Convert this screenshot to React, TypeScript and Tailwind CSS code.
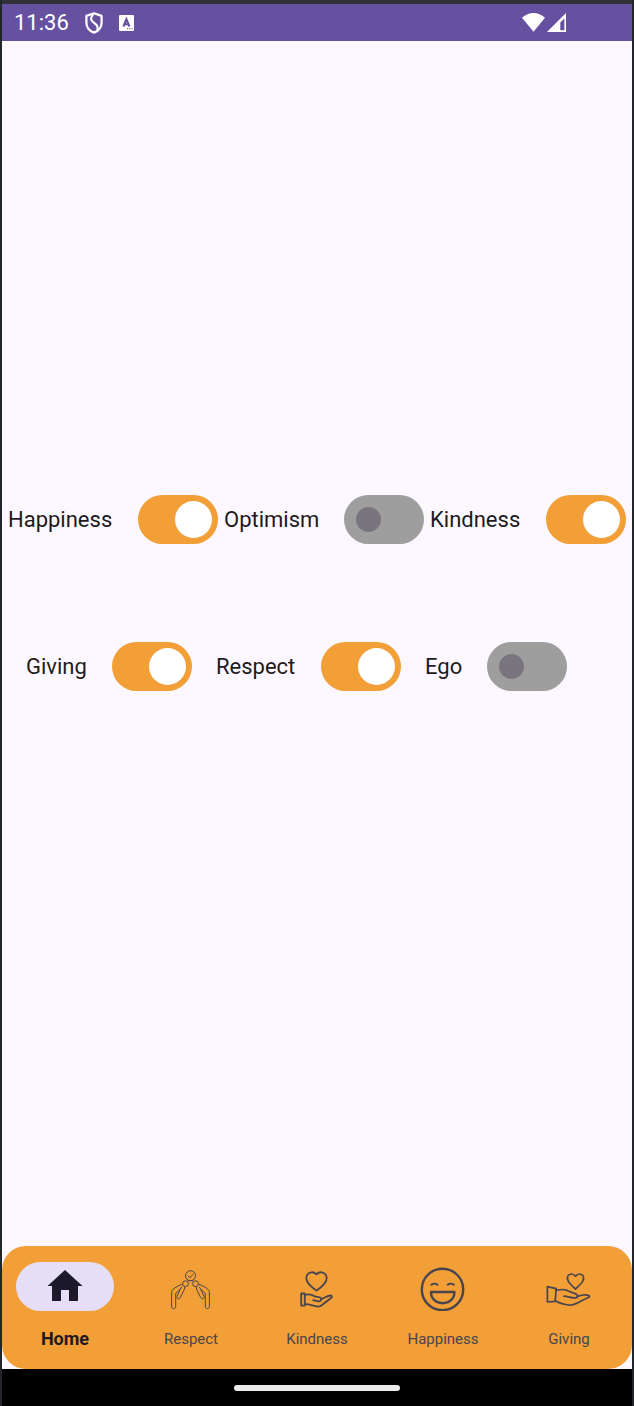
import { useState, type ReactNode } from "react";

function ShieldIcon() {
  return (
    <svg className="h-[22px] w-[18px]" viewBox="0 0 18 22" fill="none" stroke="currentColor" strokeWidth="2.2" strokeLinejoin="round" aria-hidden="true">
      <path d="M9 1.3 16.6 3.9V10.4C16.6 15 13.6 18.9 9 20.6 4.4 18.9 1.4 15 1.4 10.4V3.9Z" />
      <path d="M8.4 2C5 6 5.5 8 8.5 10.4 12.5 13.4 13.5 15 12.2 18.2" />
    </svg>
  );
}

function LetterIcon() {
  return (
    <svg className="h-4 w-[15px]" viewBox="0 0 15 16" aria-hidden="true">
      <rect width="15" height="16" rx="1" fill="currentColor" />
      <path d="M4.4 11.5 7.4 4.2 10.4 11.5M5.5 9.2H9.3" fill="none" stroke="#65519f" strokeWidth="2.1" />
      <path d="M8 13.8h1.2M10.2 13.8h1.2M12.4 13.8h1.2" stroke="#65519f" strokeWidth="1.1" />
    </svg>
  );
}

function WifiIcon() {
  return (
    <svg className="h-5 w-[23px]" viewBox="0 0 23 20" fill="currentColor" aria-hidden="true">
      <path d="M0 4.8C6.6-1.6 16.4-1.6 23 4.8L11.5 18.8Z" />
    </svg>
  );
}

function SignalIcon() {
  return (
    <svg className="h-5 w-[19px]" viewBox="0 0 19 20" aria-hidden="true">
      <path fill="currentColor" fillRule="evenodd" d="M19 0V19H0ZM17.4 5.6 13.3 9.4V17.2H17.4Z" />
    </svg>
  );
}

function HomeIcon() {
  return (
    <svg className="h-[49px] w-[50px]" viewBox="0 0 50 49" fill="#1c192b" aria-hidden="true">
      <path d="M25 8 42.5 24H38V39H29V28H21V39H12V24H7.5Z" />
    </svg>
  );
}

function RespectIcon() {
  const person = (
    <>
      <circle cx="19.5" cy="21.7" r="2.9" />
      <path d="M16.2 22.3C13 23.2 8.5 25.8 6.2 28.2 5.6 29 5.6 29.6 5.6 31V44.7C5.6 47.2 9.7 47.2 9.7 44.7V31.4L14.3 27.2 11 34.5C10.4 36.8 13 37.8 14.2 35.8L18.3 27.5 18.8 24.8" />
      <path d="M14.3 27.2 15.8 24.8" />
    </>
  );
  return (
    <svg className="h-[49px] w-[50px]" viewBox="0 0 50 49" fill="none" stroke="currentColor" strokeWidth="1" strokeLinejoin="round" aria-hidden="true">
      <circle cx="24.5" cy="13.7" r="5" />
      <path d="M21.8 13.8 23.8 15.6 27.5 12M21.8 18.6H27.2" />
      {person}
      <g transform="matrix(-1 0 0 1 49 0)">{person}</g>
    </svg>
  );
}

function KindnessIcon() {
  return (
    <svg className="h-[49px] w-[50px]" viewBox="0 0 50 49" fill="none" stroke="currentColor" strokeWidth="1.8" strokeLinejoin="round" strokeLinecap="round" aria-hidden="true">
      <path d="M24.5 12.4C21.5 9 16.8 10 15 13.2 13 17.4 15.6 22.6 24.5 28.6 33.4 22.6 36 17.4 34 13.2 32.2 10 27.5 9 24.5 12.4Z" />
      <path d="M9.2 31.5H12.8V43.6H9.2Z" />
      <path d="M12.8 33C17 31.6 19.4 32 22.5 34.2 24 35.3 27.6 34.6 28.8 36 29.8 37.6 29 39.2 27.2 39.3 25 39.4 23 38.8 21.2 38.2" />
      <path d="M29.4 37.2C32 36.2 35 33.8 38.2 33.5 40.2 33.4 40.4 35 39 36 35.8 38.3 32 42 28.2 44.2 23.6 46 18.5 41.6 12.8 42.2" />
    </svg>
  );
}

function HappinessIcon() {
  return (
    <svg className="h-[49px] w-[50px]" viewBox="0 0 50 49" fill="none" stroke="currentColor" strokeWidth="2.4" strokeLinejoin="round" strokeLinecap="round" aria-hidden="true">
      <circle cx="24.5" cy="27.4" r="20.7" />
      <path d="M13 30H36.4C36.4 37 31.4 41.2 24.7 41.2S13 37 13 30Z" />
      <path strokeWidth="2" d="M13.4 22.8C15 21.4 17.8 21.4 19.4 22.8M29.8 22.8C31.4 21.4 34.2 21.4 35.8 22.8" />
    </svg>
  );
}

function GivingIcon() {
  return (
    <svg className="h-[49px] w-[50px]" viewBox="0 0 50 49" fill="none" stroke="currentColor" strokeWidth="1.7" strokeLinejoin="round" strokeLinecap="round" aria-hidden="true">
      <path d="M31.5 14.2C29 11 25.2 11.6 23.8 14 22.2 17.4 24.4 20.6 31.5 27 38.6 20.6 40.8 17.4 39.2 14 37.8 11.6 34 11 31.5 14.2Z" />
      <path d="M3.4 24.6 12.2 26.6 11.2 39.4 3.4 40Z" />
      <path d="M12.2 28.2C16 28.2 18.4 26.6 22 28 25.6 29.8 28.6 30.9 31.2 31.6 34.2 32.6 34.4 35.4 31.4 35.9 27.6 36.2 24.2 34.4 20 34.2" />
      <path d="M33.5 34.4C37 33.2 42 32 45.2 33.8 46.2 34.8 44.6 35.6 43.4 36 38.2 37.8 33.8 42 28 43 21.8 43.4 16.4 41.6 11.2 38.8" />
    </svg>
  );
}

type SwitchProps = { label: string; initial: boolean; className: string };

function ValueSwitch({ label, initial, className }: SwitchProps) {
  const [on, setOn] = useState(initial);
  return (
    <label className={`flex shrink-0 items-center justify-between ${className}`}>
      <span>{label}</span>
      <input
        type="checkbox"
        role="switch"
        checked={on}
        onChange={(e) => setOn(e.target.checked)}
        className="flex h-[49px] w-20 shrink-0 appearance-none items-center rounded-full bg-[#9e9e9e] pl-3 before:block before:size-[25px] before:rounded-full before:bg-[#79747e] before:content-[''] checked:bg-[#f29f38] checked:pl-[37px] checked:before:size-[37px] checked:before:bg-white"
      />
    </label>
  );
}

const tabs: { name: string; icon: ReactNode }[] = [
  { name: "Home", icon: <HomeIcon /> },
  { name: "Respect", icon: <RespectIcon /> },
  { name: "Kindness", icon: <KindnessIcon /> },
  { name: "Happiness", icon: <HappinessIcon /> },
  { name: "Giving", icon: <GivingIcon /> },
];

export default function App() {
  const [active, setActive] = useState("Home");
  return (
    <div className="flex min-h-screen flex-col border-x-2 border-[#22262b] bg-[#fdf8ff] font-[Roboto,sans-serif] text-[#1d1b20]">
      <header className="flex h-[41px] shrink-0 items-center border-t-4 border-[#2f3238] bg-[#65519f] pr-[66px] pl-3 text-white">
        <time className="text-[22px] leading-6">11:36</time>
        <div className="ml-4 flex items-center gap-4">
          <ShieldIcon />
          <LetterIcon />
        </div>
        <div className="ml-auto flex items-center gap-0.5">
          <WifiIcon />
          <SignalIcon />
        </div>
      </header>

      <main className="flex grow flex-col justify-center gap-[98px] pb-[101px] text-[22px] leading-8">
        <div className="flex justify-between px-1.5">
          <ValueSwitch label="Happiness" initial={true} className="w-[210px]" />
          <ValueSwitch label="Optimism" initial={false} className="w-[200px]" />
          <ValueSwitch label="Kindness" initial={true} className="w-[196px]" />
        </div>
        <div className="flex gap-6 px-6">
          <ValueSwitch label="Giving" initial={true} className="w-[166px]" />
          <ValueSwitch label="Respect" initial={true} className="w-[185px]" />
          <ValueSwitch label="Ego" initial={false} className="w-[142px]" />
        </div>
      </main>

      <nav className="grid shrink-0 grid-cols-5 rounded-3xl bg-[#f29f38] pt-4 pb-[18px]">
        {tabs.map((tab) => {
          const selected = tab.name === active;
          return (
            <button
              key={tab.name}
              type="button"
              aria-current={selected ? "page" : undefined}
              onClick={() => setActive(tab.name)}
              className={`flex flex-col items-center gap-4 ${selected ? "text-[#1d1b20]" : "text-[#49454f]"}`}
            >
              <span className={`flex w-[98px] justify-center rounded-full ${selected ? "bg-[#e6def6]" : ""}`}>{tab.icon}</span>
              <span className={`leading-6 ${selected ? "text-lg font-bold" : "text-[15px]"}`}>{tab.name}</span>
            </button>
          );
        })}
      </nav>

      <footer className="flex h-[37px] shrink-0 items-center justify-center bg-black">
        <div className="h-1.5 w-[166px] rounded-full bg-[#ececec]" />
      </footer>
    </div>
  );
}
